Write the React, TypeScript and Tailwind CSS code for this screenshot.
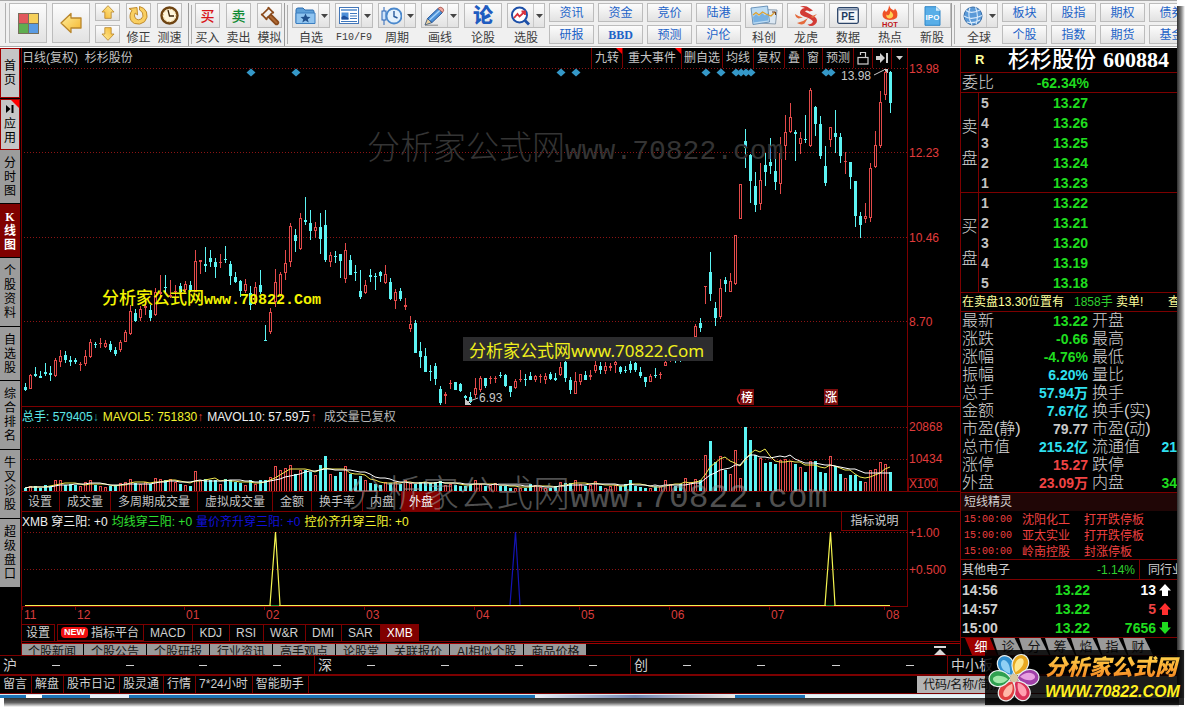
import React from "react";
import { Gavel } from "lucide-react";

const MONO = "[font-family:'Liberation_Mono','Noto_Sans_CJK_SC',monospace]";
const SERIF = "[font-family:'Liberation_Serif','Noto_Sans_CJK_SC',serif]";

/* ------------------------------------------------------------------ */
/* Data                                                                */
/* ------------------------------------------------------------------ */

// [high, low, body top, body bottom, rising], three units per pixel
type Candle = [number, number, number, number, 0 | 1];

const CANDLES: Candle[] = [
  [1015,1037,1025,1035,0],[988,1033,990,1033,1],[966,995,987,993,0],[978,1000,993,998,0],[955,992,981,987,0],
  [962,1007,985,990,0],[938,995,945,992,1],[915,965,933,952,1],[918,955,930,945,0],[933,962,946,950,0],
  [938,958,946,950,0],[950,978,956,960,1],[915,962,933,956,1],[882,940,892,935,1],[892,908,896,900,0],
  [880,910,893,896,1],[886,908,894,905,1],[888,922,898,915,0],[906,932,914,926,0],[885,922,892,914,1],
  [856,892,862,890,1],[780,870,798,866,1],[792,830,803,828,0],[782,828,792,820,1],[770,810,783,788,1],
  [780,828,795,820,0],[728,812,742,810,1],[690,755,742,748,1],[690,745,725,730,0],[705,760,750,755,1],
  [720,760,738,742,1],[715,745,722,740,0],[708,740,718,735,1],[708,742,720,738,0],[615,742,648,740,1],
  [645,686,646,650,1],[606,680,658,664,0],[615,665,640,650,0],[640,698,650,666,0],[628,670,650,654,1],
  [602,654,641,645,0],[648,720,656,692,0],[682,714,696,712,0],[704,755,708,738,0],[702,745,718,738,1],
  [722,795,745,780,0],[710,780,726,775,1],[675,748,720,742,0],[840,888,885,888,0],[788,866,800,860,1],
  [672,785,710,770,1],[680,755,688,752,1],[615,704,655,684,1],[533,665,544,650,1],[553,620,570,588,0],
  [505,616,520,612,1],[456,540,524,532,0],[495,584,535,558,0],[532,578,545,558,1],[504,626,546,582,0],
  [495,650,540,645,0],[622,665,630,652,1],[618,655,633,636,0],[626,698,628,648,0],[595,714,616,702,1],
  [630,690,645,690,0],[660,708,681,684,0],[675,762,738,756,0],[705,746,720,745,1],[672,710,690,695,0],
  [685,735,693,697,0],[678,712,682,692,0],[660,718,688,714,1],[700,765,710,762,0],[732,792,740,768,1],
  [728,768,738,762,0],[758,795,780,785,1],[812,860,836,852,1],[825,925,835,923,0],[890,970,917,935,0],
  [910,980,933,980,0],[960,1008,978,982,0],[955,1020,963,1002,0],[1022,1080,1032,1074,0],[1042,1078,1048,1054,1],
  [1005,1032,1014,1018,1],[1010,1036,1012,1034,0],[1015,1042,1018,1038,0],[1050,1080,1052,1058,0],[1042,1075,1055,1070,0],
  [1000,1060,1028,1050,1],[993,1042,1000,1036,1],[998,1028,1000,1022,0],[992,1016,1000,1003,1],[992,1014,999,1002,1],
  [980,998,990,994,0],[988,1025,990,1022,0],[1022,1055,1024,1040,0],[1002,1032,1008,1028,1],[975,1010,1003,1006,1],
  [988,1022,1003,1006,0],[980,1006,992,1004,0],[990,1010,994,1006,1],[988,1014,992,996,1],[983,1018,992,1004,1],
  [980,1004,986,1002,0],[985,1008,1000,1004,0],[952,994,966,990,1],[945,1010,950,1000,0],[995,1048,1006,1036,0],
  [980,1048,1008,1046,1],[988,1020,988,1010,1],[978,1004,990,1004,0],[975,1004,990,996,1],[948,985,960,978,1],
  [952,988,962,975,0],[950,986,962,978,1],[954,978,964,968,1],[945,985,950,960,1],[964,986,966,982,0],
  [962,985,974,978,0],[948,985,958,976,0],[950,980,955,975,0],[965,998,980,994,0],[995,1025,996,1010,0],
  [988,1012,993,1010,1],[970,1000,990,994,0],[980,1002,986,990,1],[945,962,950,962,1],[935,950,940,945,1],
  [938,955,942,946,0],[935,950,940,945,0],[900,945,910,940,1],[880,930,890,920,1],[838,880,844,876,1],
  [820,860,834,848,0],[722,776,722,724,1],[620,768,682,748,0],[770,842,788,820,0],[702,822,730,815,1],
  [695,742,704,718,0],[684,742,708,740,1],[570,720,571,716,1],[418,522,418,521,1],[252,368,288,308,0],
  [328,474,331,408,0],[380,500,424,480,0],[353,494,405,478,1],[325,422,360,380,0],[279,386,350,362,0],
  [310,434,378,410,0],[275,448,325,418,1],[210,346,262,304,1],[174,264,216,262,1],[254,347,260,266,0],
  [260,328,280,296,1],[210,294,283,286,0],[128,306,134,304,1],[183,272,186,236,0],[212,342,237,333,0],
  [303,422,363,414,0],[246,306,246,285,1],[195,324,263,276,0],[264,354,276,333,0],[320,388,349,352,1],
  [350,432,352,396,0],[407,546,408,513,0],[502,578,513,540,0],[474,534,512,522,1],[353,530,370,518,1],
  [258,368,300,367,1],[138,310,172,302,1],[75,165,82,150,1],[78,204,80,174,0],
];

// Volume per day, three units per pixel
const VOLUMES: number[] = [
  264,258,256,262,254,258,238,238,254,252,254,258,246,240,255,256,260,256,254,248,246,235,248,252,246,252,232,236,
  240,236,244,250,254,256,213,240,236,240,238,250,236,240,246,248,254,240,252,240,240,230,198,210,202,195,220,208,
  208,215,225,195,168,220,228,216,198,222,235,228,240,248,250,255,246,248,245,250,240,248,252,246,244,248,246,242,
  254,250,254,258,258,252,238,250,258,254,248,256,258,262,262,262,262,252,254,260,262,262,256,246,248,248,240,252,
  256,254,242,256,262,256,254,256,250,238,258,260,262,262,258,258,238,250,256,252,234,246,236,238,165,122,185,168,
  208,222,150,232,80,120,165,172,188,186,192,180,175,182,192,200,216,183,183,215,218,168,198,222,232,225,225,242,
  244,210,205,186,190,216,
].map((top) => 272 - top);

const movingAverage = (days: number) =>
  VOLUMES.map((_, i) => {
    const part = VOLUMES.slice(Math.max(0, i - days + 1), i + 1);
    const mean = part.reduce((a, b) => a + b, 0) / part.length;
    return `${3 + i * 5},${Math.round(64 - mean / 3)}`;
  }).join(" ");

const DIAMONDS = [229, 274, 539, 554, 684, 699, 714, 719, 724, 729, 804, 809];

const RAIL = [
  { text: "分时图", h: "h-[54px]" },
  { text: "K线图", h: "h-[54px]", active: true },
  { text: "个股资料", h: "h-[69px]" },
  { text: "自选股", h: "h-[54px]" },
  { text: "综合排名", h: "h-[69px]" },
  { text: "牛叉诊股", h: "h-[69px]" },
  { text: "超级盘口", h: "h-[69px]" },
];

const SELL = [["5", "13.27"], ["4", "13.26"], ["3", "13.25"], ["2", "13.24"], ["1", "13.23"]];
const BUY = [["1", "13.22"], ["2", "13.21"], ["3", "13.20"], ["4", "13.19"], ["5", "13.18"]];

const GREEN = "text-[#1fdc1f]";
const CYAN = "text-[#2fe0f0]";
const RED = "text-[#f04444]";
const GRAY = "text-[#c8c8c8]";

const DETAILS: [string, string, string, string, string, string][] = [
  ["最新", "13.22", GREEN, "开盘", "", GREEN],
  ["涨跌", "-0.66", GREEN, "最高", "", GREEN],
  ["涨幅", "-4.76%", GREEN, "最低", "", GREEN],
  ["振幅", "6.20%", CYAN, "量比", "", GREEN],
  ["总手", "57.94万", CYAN, "换手", "", GREEN],
  ["金额", "7.67亿", CYAN, "换手(实)", "", GREEN],
  ["市盈(静)", "79.77", GRAY, "市盈(动)", "", GREEN],
  ["总市值", "215.2亿", CYAN, "流通值", "21", CYAN],
  ["涨停", "15.27", RED, "跌停", "", GREEN],
  ["外盘", "23.09万", RED, "内盘", "34", GREEN],
];

const ALERTS = [
  ["15:00:00", "沈阳化工", "打开跌停板"],
  ["15:00:00", "亚太实业", "打开跌停板"],
  ["15:00:00", "岭南控股", "封涨停板"],
];

/* ------------------------------------------------------------------ */
/* Toolbar                                                             */
/* ------------------------------------------------------------------ */

const FACE = "flex items-center justify-center border border-[#bcbcbc] bg-gradient-to-b from-[#fcfcfc] to-[#e2e2e2]";

function Separator() {
  return (
    <div className="flex h-full w-1 shrink-0 justify-between border-l border-[#9c9c9c] py-0.5">
      <span />
      <span className="w-px bg-[#b0b0b0]" />
    </div>
  );
}

function Tool({ label, icon, menu, narrow }: { label: string; icon: React.ReactNode; menu?: boolean; narrow?: boolean }) {
  return (
    <button className={`flex shrink-0 flex-col items-center ${narrow ? "w-[25px]" : "w-[38px]"}`}>
      <span className={`${FACE} h-[25px] w-full`}>
        <span className="flex flex-1 items-center justify-center">{icon}</span>
        {menu && (
          <span className="flex h-full w-[11px] items-center justify-center border-l border-[#c8c8c8]">
            <svg width="7" height="4"><path d="M0 0H7L3.5 4Z" fill="#444" /></svg>
          </span>
        )}
      </span>
      <span className={`mt-0.5 h-4 whitespace-nowrap leading-4 text-[#3c3c3c] ${label === "F10/F9" ? `text-[10px] ${MONO}` : "text-xs"}`}>{label}</span>
    </button>
  );
}

function Pairs({ pairs }: { pairs: string[][] }) {
  return (
    <div className="flex shrink-0 gap-1">
      {pairs.map(([a, b]) => (
        <div key={a} className="flex w-[45px] flex-col gap-[3px]">
          {[a, b].map((t) => (
            <button key={t} className={`${FACE} h-[19px] w-full text-xs leading-4 text-[#1c63c8] ${t === "BBD" ? `font-bold ${SERIF}` : ""}`}>
              {t}
            </button>
          ))}
        </div>
      ))}
    </div>
  );
}

const Arrow = ({ size, turn }: { size: number; turn: string }) => (
  <svg width={size} height={size} viewBox="0 0 22 22" className={turn}>
    <defs>
      <linearGradient id="gold" x1="0" y1="0" x2="1" y2="1">
        <stop offset="0" stopColor="#fff0a0" /><stop offset="1" stopColor="#f5b52c" />
      </linearGradient>
    </defs>
    <path d="M1 11 11 1.5V6H21V16H11V20.5Z" fill="url(#gold)" stroke="#b9862c" strokeWidth="1.3" strokeLinejoin="round" />
  </svg>
);

const HomeIcon = () => (
  <svg width="21" height="21">
    <rect width="21" height="21" fill="#77705c" />
    <rect x="1" y="1" width="9" height="9" fill="#e2585c" /><rect x="11" y="1" width="9" height="9" fill="#f6d05a" />
    <rect x="1" y="11" width="9" height="9" fill="#5fae50" /><rect x="11" y="11" width="9" height="9" fill="#5a9be2" />
  </svg>
);
const RedoIcon = () => (
  <svg width="21" height="21" viewBox="0 0 21 21">
    <path d="M1 3.500 9 2.500 9.500 10 7.200 8Q5.500 11 7.500 13.500Q10 16 13.200 14Q16 11.500 14.500 8Q13.500 6 11.500 5V1.500Q16.500 2.500 18.500 7Q20.500 12.500 16.500 16.800Q12 20.500 6.500 18.500Q1.500 16 2 10.500Q2.300 7.500 4 5.500Z" fill="#f9cf62" stroke="#b98222" strokeWidth=".9" strokeLinejoin="round" />
  </svg>
);
const ClockIcon = () => (
  <svg width="19" height="19" viewBox="0 0 19 19">
    <circle cx="9.500" cy="9.500" r="8" fill="#fff6dc" stroke="#6e4413" strokeWidth="2.400" />
    <circle cx="9.500" cy="9.500" r="6.200" fill="none" stroke="#d09a40" strokeDasharray="1 2.200" />
    <path d="M8 4 9.500 10H14" fill="none" stroke="#3c2408" strokeWidth="1.300" />
  </svg>
);
const FolderIcon = () => (
  <svg width="21" height="18" viewBox="0 0 21 18">
    <path d="M1 16V3Q1 1 3 1H8L10 3H18Q19 3 19 5V7" fill="#5d9fd8" stroke="#2f6fb0" />
    <path d="M1 6H20V16.500H1Z" fill="#8fc4f0" stroke="#3c7fc0" />
    <path d="M10.500 6.500 12 9.800 15.500 10 12.800 12.200 13.700 15.500 10.500 13.600 7.300 15.500 8.200 12.200 5.500 10 9 9.800Z" fill="#21508c" />
  </svg>
);
const NewsIcon = () => (
  <svg width="20" height="17" viewBox="0 0 20 17">
    <rect x=".5" y=".5" width="19" height="16" fill="#fff" stroke="#4477b8" />
    <rect x="2" y="2" width="16" height="2" fill="#7aa6d8" /><rect x="2.500" y="5.500" width="7" height="7" fill="#4d8fd8" />
    <path d="M2.500 12.500V10L5 8.500 9.500 11V12.500Z" fill="#1c4f9c" />
    <path d="M11 6.500H18M11 9H18M11 11.500H18M2 14.500H18" stroke="#3f78bd" />
  </svg>
);
const CycleIcon = () => (
  <svg width="21" height="20" viewBox="0 0 21 20">
    <path d="M3 1V19" stroke="#2b66b8" /><rect x="1" y="5" width="4" height="9" fill="#cfe4fa" stroke="#2b66b8" />
    <circle cx="13" cy="10" r="7.500" fill="#e4f1fd" stroke="#4a88cc" strokeWidth="1.800" />
    <path d="M13 5V10.500L16.500 12" fill="none" stroke="#285a9c" strokeWidth="1.400" />
  </svg>
);
const PencilIcon = () => (
  <svg width="21" height="20" viewBox="0 0 21 20">
    <path d="M1 19 3.500 12.500 8 16.500Z" fill="#e8cfa0" stroke="#26466e" strokeWidth=".8" />
    <path d="M3.500 12.500 14 2.500 18.500 6.500 8 16.500Z" fill="#4c92d8" stroke="#26569a" /><path d="M5.500 14 16 4.200" stroke="#a9d4fa" strokeWidth="1.500" />
    <path d="M14 2.500Q16 0 18.500 2T18.500 6.500Z" fill="#f0a8a0" stroke="#a05048" strokeWidth=".8" /><path d="M1 19.200H14" stroke="#888" />
  </svg>
);
const PickIcon = () => (
  <svg width="21" height="20" viewBox="0 0 21 20">
    <circle cx="9.500" cy="9" r="7.500" fill="#fff" stroke="#1c4fa8" strokeWidth="2" />
    <path d="M15 14.500 19 18.500" stroke="#1c4fa8" strokeWidth="2.800" />
    <path d="M4 12 7.500 8 9.500 10.500 14.500 6M11.500 5.500H15V9" fill="none" stroke="#d8303c" strokeWidth="1.800" />
  </svg>
);
const ChartsIcon = () => (
  <svg width="28" height="21" viewBox="0 0 28 21">
    <path d="M9 4.500 27 5 25.500 19 8 18Z" fill="#dbe7f2" stroke="#8d9fb0" />
    <path d="M1 3 17.500 1 19.500 17 3 19.500Z" fill="#bcdcf4" stroke="#6a93ba" />
    <path d="M3 12 6 9 9 11.500 12 8 15 10.500 18 8V15.500L3.500 17.500Z" fill="#78b1e2" />
    <path d="M3 10 6 7.500 9 10 12.500 7 16 9 21 11 25 7" fill="none" stroke="#e0a02c" strokeWidth="1.300" /><path d="M22 7H25.500V10" fill="none" stroke="#704020" />
  </svg>
);
const DragonIcon = () => (
  <svg width="27" height="22" viewBox="0 0 27 22">
    <path d="M7 2Q12-.5 17 3.500L20 5.500 16.500 6.500Q13.500 4.500 12 6.500Q17 9 22 12Q26 15.500 22 19.500Q18 22.500 14.500 19.500Q19 19.500 20 16.500Q18 13.500 11 11.500Q5 9 8 5Q9.500 3 12 3Q9.500 1.500 7 2Z" fill="#d23a34" />
    <path d="M2 9Q6 12 10 12.500L5.500 13.500Q2.500 12.500 2 9ZM4 18Q10 17 15 13L11.500 18.500Q8 20.500 4 18ZM17 12 24 9 20 13Z" fill="#e46a3c" />
  </svg>
);
const PeIcon = () => (
  <svg width="22" height="17" viewBox="0 0 22 17">
    <rect x=".7" y=".7" width="20.600" height="15.600" rx="1.500" fill="#f4f6f9" stroke="#2b4468" strokeWidth="1.300" />
    <path d="M1 2.500H21" stroke="#7f93ae" strokeWidth="2" />
    <text x="11" y="13" textAnchor="middle" fontFamily="Liberation Sans" fontWeight="700" fontSize="10" fill="#223a60">PE</text>
  </svg>
);
const HotIcon = () => (
  <svg width="22" height="22" viewBox="0 0 22 22">
    <path d="M10 0Q11 4 15 5.500L16 3.500Q20 8 17.500 13Q15 15 11 15Q6 15 4 12Q2.500 8 5.500 5L7 7Q10 4.500 10 0Z" fill="#ef5226" />
    <path d="M11 6Q15 8.500 14 11.500Q12.500 14 10 13.500Q6.500 12.500 7.500 9.500L9 10.500Q11.500 9 11 6Z" fill="#ffd052" />
    <text x="11" y="21.500" textAnchor="middle" fontFamily="Liberation Sans" fontWeight="700" fontSize="7.500" fill="#c01418">HOT</text>
  </svg>
);
const IpoIcon = () => (
  <svg width="17" height="20" viewBox="0 0 17 20">
    <path d="M1 .7H12L16 4.700V19.300H1Z" fill="#58aee8" stroke="#2f86c8" /><path d="M12 .7V4.700H16Z" fill="#d4ecfb" />
    <text x="8.500" y="14" textAnchor="middle" fontFamily="Liberation Sans" fontWeight="700" fontSize="8" fill="#fff">IPO</text>
  </svg>
);
const GlobeIcon = () => (
  <svg width="21" height="20" viewBox="0 0 21 20">
    <circle cx="10" cy="10" r="9" fill="#5a9ad8" stroke="#3a6fa8" />
    <path d="M3 4.500Q8 8.500 17 4M1 10Q8 15 19 9.500M4 16Q10 18 17 14M7 1.500Q4 10 9 19M12.500 1.200Q16 10 13 18.500" fill="none" stroke="#d8eafa" strokeWidth="1.100" />
  </svg>
);

function Toolbar() {
  return (
    <header className="flex h-12 overflow-hidden border-b border-white bg-[#f0f0f0]">
      <div className="flex w-full items-start border-y border-[#a8a8a8] pl-[5px] pt-0.5">
        <div className="mr-[3px] h-10 w-px shrink-0 bg-[#b0b0b0]" />
        <div className="flex shrink-0 gap-[5px]">
          <button aria-label="主页" className={`${FACE} h-10 w-[38px]`}><HomeIcon /></button>
          <button aria-label="后退" className={`${FACE} h-10 w-[38px]`}><Arrow size={22} turn="" /></button>
          <div className="flex flex-col gap-1">
            <button aria-label="上一个" className={`${FACE} h-[18px] w-[25px]`}><Arrow size={14} turn="rotate-90" /></button>
            <button aria-label="下一个" className={`${FACE} h-[18px] w-[25px]`}><Arrow size={14} turn="-rotate-90" /></button>
          </div>
        </div>
        <div className="flex shrink-0 gap-1.5 px-1.5">
          <Tool narrow label="修正" icon={<RedoIcon />} />
          <Tool narrow label="测速" icon={<ClockIcon />} />
        </div>
        <Separator />
        <div className="flex shrink-0 gap-1.5 pl-[3px] pr-0.5">
          <Tool narrow label="买入" icon={<span className="text-sm font-medium leading-4 text-[#d81418]">买</span>} />
          <Tool narrow label="卖出" icon={<span className="text-sm font-medium leading-4 text-[#128a34]">卖</span>} />
          <Tool narrow label="模拟" icon={<Gavel size={20} className="-scale-x-100 fill-[#b06a34] text-[#8a4a1c]" />} />
        </div>
        <Separator />
        <div className="flex shrink-0 gap-[5px] px-1">
          <Tool menu label="自选" icon={<FolderIcon />} />
          <Tool menu label="F10/F9" icon={<NewsIcon />} />
          <Tool menu label="周期" icon={<CycleIcon />} />
          <Tool menu label="画线" icon={<PencilIcon />} />
          <Tool label="论股" icon={<span className="text-xl font-black leading-5 text-[#1f5cc0]">论</span>} />
          <Tool menu label="选股" icon={<PickIcon />} />
        </div>
        <Pairs pairs={[["资讯", "研报"], ["资金", "BBD"], ["竞价", "预测"], ["陆港", "沪伦"]]} />
        <div className="flex shrink-0 gap-1 pl-1">
          <Tool label="科创" icon={<ChartsIcon />} />
          <Tool label="龙虎" icon={<DragonIcon />} />
          <Tool label="数据" icon={<PeIcon />} />
          <Tool label="热点" icon={<HotIcon />} />
          <Tool label="新股" icon={<IpoIcon />} />
        </div>
        <Separator />
        <div className="flex shrink-0 gap-1 pl-[5px]">
          <Tool menu label="全球" icon={<GlobeIcon />} />
          <Pairs pairs={[["板块", "个股"], ["股指", "指数"], ["期权", "期货"], ["债券", "基金"]]} />
        </div>
      </div>
    </header>
  );
}

/* ------------------------------------------------------------------ */
/* Left rail                                                           */
/* ------------------------------------------------------------------ */

function Rail() {
  const column = "w-[13px] break-all text-center text-xs leading-[14px]";
  return (
    <nav className="flex w-[21px] shrink-0 flex-col bg-black pr-px text-black">
      <button className="flex h-[50px] items-center justify-center border border-[#a00000] bg-[#c6c6c6]">
        <span className={column}>首页</span>
      </button>
      <button className="relative mt-px flex h-[51px] flex-col items-center justify-center border border-[#a00000] bg-[#c6c6c6]">
        <svg width="8" height="8" className="mb-1"><path d="M0 0 4.500 4 0 8ZM5.500 0H7.500V8H5.500Z" /></svg>
        <span className={column}>应用</span>
        <svg width="8" height="8" className="absolute right-0 top-0"><path d="M0 0H8V8Z" fill="#f00" /></svg>
      </button>
      {RAIL.map((r) => (
        <button
          key={r.text}
          className={`flex items-center justify-center border-b border-black ${r.h} ${r.active ? "bg-[#800000] text-white" : "bg-[#9c9c9c]"}`}
        >
          <span className={`${column} ${r.active ? `font-bold ${SERIF}` : ""}`}>{r.text}</span>
        </button>
      ))}
    </nav>
  );
}

/* ------------------------------------------------------------------ */
/* Chart sections                                                      */
/* ------------------------------------------------------------------ */

function Grid({ ys }: { ys: number[] }) {
  return (
    <>
      {ys.map((y) => (
        <line key={y} x1="2" x2="100%" y1={y + 0.5} y2={y + 0.5} stroke="#8c1414" strokeDasharray="1 2" />
      ))}
    </>
  );
}

function Axis({ labels, height, box }: { labels: [number, string][]; height: number; box?: boolean }) {
  return (
    <svg height={height} className="w-[52px] shrink-0 text-xs" fill="#e03c3c">
      {box && <rect x=".5" y="71.500" width="29" height="13" fill="none" stroke="#7c0000" />}
      {labels.map(([y, t]) => (
        <text key={t} x="1" y={y + 4}>{t}</text>
      ))}
    </svg>
  );
}

function Badge({ x, text }: { x: number; text: string }) {
  return (
    <g>
      <rect x={x - 1} y="321" width="14" height="16" fill="#7c0c0c" />
      <text x={x} y="334" fill="#fff" fontSize="12" fontWeight="500">{text}</text>
    </g>
  );
}

function Watermark({ cjk, latin, className }: { cjk: string; latin: string; className: string }) {
  return (
    <div aria-hidden="true" className={`pointer-events-none absolute flex items-baseline whitespace-nowrap ${className}`}>
      <span className={cjk}>分析家公式网</span>
      <span className={`${latin} ${MONO}`}>www.70822.com</span>
    </div>
  );
}

function PriceChart() {
  const tab = "h-full border-l border-[#7c0000]";
  return (
    <section className="relative flex border-b border-[#7c0000]">
      <div className="min-w-0 flex-1 border-r border-[#7c0000]">
        <div className="flex h-5 items-center justify-between text-xs leading-4 text-[#c4c4c4]">
          <h2>日线(复权)&nbsp; 杉杉股份</h2>
          <div className="flex h-full">
            <button className={`${tab} relative px-[3px]`}>
              九转<svg width="6" height="6" className="absolute right-0 top-0"><path d="M0 0H6V6Z" fill="#f00" /></svg>
            </button>
            <button className={`${tab} relative px-[5px]`}>
              重大事件<svg width="6" height="6" className="absolute right-0 top-0"><path d="M0 0H6V6Z" fill="#f00" /></svg>
            </button>
            <button className={`${tab} px-0.5`}>删自选</button>
            <button className={`${tab} px-[3px]`}>均线</button>
            <button className={`${tab} px-[3px]`}>复权</button>
            <button className={`${tab} px-[3px]`}>叠</button>
            <button className={`${tab} px-[3px]`}>窗</button>
            <button className={`${tab} px-[3px]`}>预测</button>
            <button aria-label="锁定" className={`${tab} px-[3px]`}>
              <svg width="12" height="14" fill="none" stroke="#d0d0d0" strokeWidth="1.200">
                <rect x="1" y="6.500" width="10" height="6.500" /><path d="M3.500 4V1.500H8.500V6.500" />
              </svg>
            </button>
            <button aria-label="末尾" className={`${tab} px-[3px]`}>
              <svg width="12" height="12" fill="#d0d0d0"><path d="M0 4H4V1L9 6 4 11V8H0ZM10 1H12V11H10Z" /></svg>
            </button>
            <button aria-label="更多" className={`${tab} px-1`}>
              <svg width="7" height="4"><path d="M0 0H7L3.500 4Z" fill="#d0d0d0" /></svg>
            </button>
          </div>
        </div>
        <svg height="338" className="block w-full" shapeRendering="crispEdges">
          <Grid ys={[0, 84, 169, 253]} />
          {CANDLES.map(([hi, lo, top, bottom, up], i) => {
            const y = (v: number) => Math.round((v - 69) / 3);
            const x = 2 + i * 5;
            const h = Math.max(1, y(bottom) - y(top));
            const color = up ? "#e24a4a" : "#5cf4f4";
            return (
              <g key={i}>
                <rect x={x + 1} y={y(hi)} width="1" height={Math.max(1, y(lo) - y(hi))} fill={color} />
                {up && h > 2 ? (
                  <rect x={x + 0.5} y={y(top) + 0.5} width="2" height={h - 1} fill="#000" stroke={color} />
                ) : (
                  <rect x={x} y={y(top)} width="3" height={h} fill={color} />
                )}
              </g>
            );
          })}
          {DIAMONDS.map((x) => (
            <path key={x} d={`M${x} 0.500l4.500 4-4.500 4-4.500-4Z`} fill="#3598c8" shapeRendering="auto" />
          ))}
          <path d="M445 334 456 330M852 7 862 2" stroke="#c8c8c8" shapeRendering="auto" />
          <path d="M443 331V337H449ZM861 1H866V6Z" fill="#c8c8c8" />
          <text x="819" y="12" fill="#c8c8c8" fontSize="12">13.98</text>
          <text x="457" y="334" fill="#c8c8c8" fontSize="12">6.93</text>
          <path d="M718 326Q713 331 718 336" fill="none" stroke="#d83030" strokeWidth="1.500" shapeRendering="auto" />
          <Badge x={719} text="榜" />
          <Badge x={803} text="涨" />
        </svg>
      </div>
      <Axis height={358} labels={[[21, "13.98"], [105, "12.23"], [190, "10.46"], [274, "8.70"]]} />
      <Watermark className="left-[345px] top-[80px] leading-10 text-[#343434]" cjk="text-[33px] font-light" latin="text-[28px]" />
      <div className="absolute left-[80px] top-[241px] flex items-baseline whitespace-nowrap leading-5 text-[#f4f400]">
        <span className="text-[17px] font-medium">分析家公式网</span>
        <span className={`text-[15px] font-bold ${MONO}`}>www.70822.Com</span>
      </div>
      <div className="absolute left-[441px] top-[289px] h-6 w-[250px] whitespace-nowrap bg-[#2c2c2e] pl-1.5 text-[17px] leading-7 text-[#f0f01c] [font-family:'Noto_Sans','Noto_Sans_CJK_SC',sans-serif]">
        分析家公式网www.70822.Com
      </div>
    </section>
  );
}

function VolumeChart() {
  return (
    <section className="relative border-b border-[#7c0000]">
      <div className="flex border-b border-[#7c0000]">
        <div className="min-w-0 flex-1 border-r border-[#7c0000]">
          <div className="flex h-5 items-center gap-1 whitespace-nowrap text-xs">
            <span className="text-[#5ce8e8]">总手: 579405<span className="text-[#28a0a8]">↓</span></span>
            <span className="text-[#f4f430]">MAVOL5: 751830<span className="text-[#e03c3c]">↑</span></span>
            <span className="text-[#f0f0f0]">MAVOL10: 57.59万<span className="text-[#e03c3c]">↑</span></span>
            <span className="text-[#b8b8b8]">&nbsp;成交量已复权</span>
          </div>
          <svg height="64" className="block w-full" shapeRendering="crispEdges">
            <Grid ys={[0, 32]} />
            {VOLUMES.map((v, i) => {
              const h = Math.round(v / 3);
              const x = 2 + i * 5;
              return CANDLES[i][4] ? (
                <rect key={i} x={x + 0.5} y={64.5 - h} width="2" height={h} fill="#000" stroke="#e24a4a" />
              ) : (
                <rect key={i} x={x} y={64 - h} width="3" height={h} fill="#5cf4f4" />
              );
            })}
            <polyline points={movingAverage(5)} fill="none" stroke="#f0e850" shapeRendering="auto" />
            <polyline points={movingAverage(10)} fill="none" stroke="#fff" shapeRendering="auto" />
          </svg>
        </div>
        <Axis height={84} box labels={[[20, "20868"], [52, "10434"], [77, "X100"]]} />
      </div>
      <div className="flex h-[19px] whitespace-nowrap text-xs text-[#c4c4c4]">
        {["设置", "成交量", "多周期成交量", "虚拟成交量", "金额", "换手率", "内盘"].map((t) => (
          <button key={t} className="border-r border-[#7c0000] px-[7px] leading-5 first:pl-1.5">{t}</button>
        ))}
        <button className="bg-[#800000] px-[7px] leading-5 text-white">外盘</button>
      </div>
      <Watermark className="left-[326px] top-[68px] leading-10 text-[#a0a0a0]/50" cjk="text-[37px] font-light" latin="text-[33px]" />
    </section>
  );
}

function IndicatorChart() {
  const months: [number, string][] = [
    [2, "11"], [55, "12"], [164, "01"], [244, "02"], [344, "03"], [454, "04"], [559, "05"], [649, "06"], [749, "07"], [864, "08"],
  ];
  return (
    <section>
      <div className="flex">
        <div className="min-w-0 flex-1 border-b border-r border-[#7c0000]">
          <div className="flex h-5 items-start justify-between whitespace-nowrap text-xs leading-5">
            <div className="flex gap-1">
              <span className="text-[#f0f0f0]">XMB 穿三阳: +0</span>
              <span className="text-[#30e030]">均线穿三阳: +0</span>
              <span className="text-[#1010d8]">量价齐升穿三阳: +0</span>
              <span className="text-[#f4f430]">控价齐升穿三阳: +0</span>
            </div>
            <button className="h-[19px] w-[66px] border-b border-l border-[#7c0000] leading-[18px] text-[#d0d0d0]">指标说明</button>
          </div>
          <svg height="74" className="block w-full" fill="none">
            <Grid ys={[0, 37]} />
            <path d="M488 73 493.500 0 498 73" stroke="#1414b4" strokeWidth="1.200" />
            <path d="M248 73 253.500 0 258 73M803 73 808.500 0 813 73" stroke="#f4f450" strokeWidth="1.200" />
            <path d="M3 73.500H868" stroke="#f4f450" />
            <path d="M249 73.500H257M804 73.500H812" stroke="#30a030" />
          </svg>
        </div>
        <Axis height={95} labels={[[21, "+1.00"], [58, "+0.500"]]} />
      </div>
      <svg height="17" className="block w-full text-xs" fill="#d83c3c">
        {months.map(([x, t]) => (
          <g key={t}><rect x={x - 2} width="1" height="3" fill="#7c0000" /><text x={x} y="12">{t}</text></g>
        ))}
      </svg>
    </section>
  );
}

function LowerTabs() {
  return (
    <>
      <div className="flex h-[18px] border-b border-[#7c0000] text-xs text-[#d0d0d0]">
        <button className="border-r border-t border-[#7c0000] px-1 leading-4">设置</button>
        <button className="ml-0.5 flex items-center gap-[3px] border border-[#7c0000] pl-[3px] pr-1 leading-4">
          <span className="rounded-sm bg-[#f01010] px-[3px] text-[9px] font-bold leading-[11px] text-white">NEW</span>指标平台
        </button>
        {["MACD", "KDJ", "RSI", "W&R", "DMI", "SAR"].map((t) => (
          <button key={t} className="border-r border-t border-[#7c0000] pl-1.5 pr-[7px] leading-4">{t}</button>
        ))}
        <button className="bg-[#800000] px-1.5 leading-4 text-white">XMB</button>
      </div>
      <div className="mt-px flex h-3 items-start justify-between overflow-hidden border-t border-[#a00000]">
        <div className="flex whitespace-nowrap text-xs leading-4 text-[#141414]">
          {["个股新闻", "个股公告", "个股研报", "行业资讯", "高手观点", "论股堂", "关联报价", "AI相似个股", "商品价格"].map((t) => (
            <button key={t} className="border-r border-black bg-[#9a9a9a] px-[7px] first:pl-1.5">{t}</button>
          ))}
        </div>
        <button aria-label="展开" className="mr-3.5 pt-0.5">
          <svg width="12" height="9" fill="#d8d8d8"><path d="M0 0H12V2H0ZM6 3 12 9H0Z" /></svg>
        </button>
      </div>
    </>
  );
}

/* ------------------------------------------------------------------ */
/* Quote panel                                                         */
/* ------------------------------------------------------------------ */

function OrderRows({ side, rows }: { side: string; rows: string[][] }) {
  return (
    <tbody>
      {rows.map(([level, price], i) => (
        <tr key={level}>
          {i === 0 && (
            <th rowSpan={5} className="w-[18px] border-b border-r border-[#7c0000] text-base font-light leading-8 text-[#d4d4d4]">
              <span className="mx-auto block w-4 break-all">{side}</span>
            </th>
          )}
          <td className={`h-5 w-5 pl-0.5 text-[#c4c4c4] ${i === 4 ? "border-b border-[#7c0000]" : ""}`}>{level}</td>
          <td className={`h-5 w-[89px] text-right ${GREEN} ${i === 4 ? "border-b border-[#7c0000]" : ""}`}>{price}</td>
          <td className={i === 4 ? "border-b border-[#7c0000]" : ""} />
        </tr>
      ))}
    </tbody>
  );
}

const Tick = ({ color, down }: { color: string; down?: boolean }) => (
  <svg width="12" height="12" className={down ? "rotate-180" : ""}><path d="M6 0 12 6.500H9V12H3V6.500H0Z" fill={color} /></svg>
);

function QuotePanel() {
  const trades = [
    { time: "14:56", size: "13", tone: "text-white", icon: <Tick color="#fff" /> },
    { time: "14:57", size: "5", tone: RED, icon: <Tick color="#ff3030" /> },
    { time: "15:00", size: "7656", tone: GREEN, icon: <Tick color="#1fdc1f" down /> },
  ];
  return (
    <aside className="flex w-[217px] shrink-0 flex-col overflow-hidden border-l border-[#7c0000] text-sm font-bold">
      <h1 className={`flex h-6 items-center whitespace-nowrap text-[22px] leading-6 text-white ${SERIF}`}>
        <span className="w-[47px] pl-3.5 text-[13px] text-[#ffff9c] [font-family:'Liberation_Sans',sans-serif]">R</span>
        <span className="font-medium">杉杉股份</span>
        <span className="pl-[7px]">600884</span>
      </h1>
      <div className="flex h-[21px] items-center border-y border-[#7c0000]">
        <span className="w-[50px] pl-px text-base font-light leading-5 text-[#d4d4d4]">委比</span>
        <span className={`w-[78px] text-right ${GREEN}`}>-62.34%</span>
      </div>
      <table className="w-full table-fixed border-separate border-spacing-0 leading-4">
        <colgroup><col className="w-[18px]" /><col className="w-5" /><col className="w-[89px]" /><col /></colgroup>
        <OrderRows side="卖盘" rows={SELL} />
        <OrderRows side="买盘" rows={BUY} />
      </table>
      <div className="flex h-[19px] items-center whitespace-nowrap border-b border-[#7c0000] pl-px text-xs font-normal text-[#ffff9c]">
        <span className="w-[112px] shrink-0">在卖盘13.30位置有</span>
        <span className="w-[42px] shrink-0 text-[#2fd02f]">1858手</span>
        <span className="w-[52px] shrink-0">卖单!</span>
        <span>查</span>
      </div>
      <table className="w-full table-fixed border-separate border-spacing-0 whitespace-nowrap leading-[18px]">
        <colgroup><col className="w-[60px]" /><col className="w-[67px]" /><col className="w-[62px]" /><col /></colgroup>
        <tbody>
          {DETAILS.map(([a, v, tone, b, w, tone2]) => (
            <tr key={a}>
              <th className="h-[18px] pl-px text-left text-base font-light leading-[18px] text-[#d4d4d4]">{a}</th>
              <td className={`text-right ${tone}`}>{v}</td>
              <th className="pl-1 text-left text-base font-light leading-[18px] text-[#d4d4d4]">{b}</th>
              <td className={`text-right ${tone2}`}>{w}</td>
            </tr>
          ))}
        </tbody>
      </table>
      <h3 className="h-[19px] border-t border-[#7c0000] bg-[#200606] pl-[3px] text-xs font-normal leading-[18px] text-[#d0d0d0]">短线精灵</h3>
      <ul className="h-[49px] border-b border-[#7c0000] pt-px text-xs font-normal leading-4 text-[#f04040]">
        {ALERTS.map(([time, name, event]) => (
          <li key={name} className="flex h-4 items-center pl-[3px]">
            <span className={`w-[58px] text-[10px] ${MONO}`}>{time}</span>
            <span className="w-[62px]">{name}</span>
            <span>{event}</span>
          </li>
        ))}
      </ul>
      <div className="flex h-5 items-center whitespace-nowrap border-b border-[#7c0000] text-xs font-normal text-[#d0d0d0]">
        <span className="w-20 shrink-0 pl-px">其他电子</span>
        <span className="h-full w-[99px] shrink-0 border-r border-[#7c0000] pr-1 text-right leading-5 text-[#2fd02f]">-1.14%</span>
        <span className="pl-2">同行业</span>
      </div>
      <table className="w-full table-fixed border-separate border-spacing-0 border-b border-[#7c0000] leading-[18px]">
        <colgroup><col className="w-[50px]" /><col className="w-[79px]" /><col className="w-[66px]" /><col /></colgroup>
        <tbody>
          {trades.map((t) => (
            <tr key={t.time}>
              <td className="h-[19px] pl-px text-[#d0d0d0]">{t.time}</td>
              <td className={`text-right ${GREEN}`}>13.22</td>
              <td className={`text-right ${t.tone}`}>{t.size}</td>
              <td className="pl-[3px]">{t.icon}</td>
            </tr>
          ))}
        </tbody>
      </table>
      <div className="flex h-[17px] overflow-hidden pl-1 text-[13px] font-normal leading-[18px] text-[#141414]">
        <button className="w-8 shrink-0 bg-[#a00000] text-white [clip-path:polygon(0_0,78%_0,100%_100%,22%_100%)]">细</button>
        {["诊", "分", "筹", "焰", "指", "财"].map((t) => (
          <button key={t} className="-ml-1 w-[30px] shrink-0 bg-[#9a9a9a] [clip-path:polygon(0_0,72%_0,100%_100%,18%_100%)]">{t}</button>
        ))}
      </div>
    </aside>
  );
}

/* ------------------------------------------------------------------ */
/* Status bars and logo                                                */
/* ------------------------------------------------------------------ */

function IndexBar() {
  return (
    <div className="grid h-5 grid-cols-[315fr_316fr_317fr_229fr] overflow-hidden border-y border-[#7c0000] text-[#d0d0d0]">
      {["沪", "深", "创"].map((t) => (
        <div key={t} className="flex items-center border-r border-[#7c0000] pl-[3px] text-sm leading-[18px]">
          <span className="w-4">{t}</span>
          {[0, 1, 2, 3].map((n) => (
            <span key={n} className="flex flex-1 justify-center"><span className="h-px w-2 bg-[#d0d0d0]" /></span>
          ))}
        </div>
      ))}
      <div className="pl-[3px] text-sm leading-[18px]">中小板</div>
    </div>
  );
}

function Footer() {
  return (
    <footer className="flex h-[19px] items-stretch justify-between border-b border-t border-[#7c0000] text-xs leading-[17px] text-[#d0d0d0]">
      <nav className="flex whitespace-nowrap">
        {["留言", "解盘", "股市日记", "股灵通", "行情", "7*24小时", "智能助手"].map((t) => (
          <a key={t} href="#" className="border-r border-[#7c0000] pl-[3px] pr-1">{t}</a>
        ))}
      </nav>
      <input aria-label="代码/名称/简拼/功能" placeholder="代码/名称/简拼/功能" className="w-[260px] bg-[#b4b4b4] pl-1.5 text-xs text-black placeholder:text-[#141414]" />
    </footer>
  );
}

function Logo() {
  const petals: [number, string, string][] = [
    [-32, "#2f8fd0", "#8fd0f4"], [24, "#e8a820", "#ffe890"], [88, "#a040a8", "#e8a0e0"], [150, "#d83058", "#ffa0b0"],
    [208, "#e04040", "#ffb8a8"], [268, "#2fa050", "#a0e8a8"],
  ];
  return (
    <div className="absolute bottom-0.5 right-[3px] flex h-[55px] w-[199px] items-center gap-1 bg-black/85 pl-0.5">
      <svg width="54" height="52" viewBox="-27 -26 54 52" className="shrink-0">
        {petals.map(([a, edge, fill]) => (
          <g key={a} transform={`rotate(${a})`}>
            <path d="M0-3C-13-12-8-25 0-25S13-12 0-3Z" fill={edge} stroke="#e8f0f0" strokeWidth="1.200" />
            <path d="M-1-6C-7-12-5-20-1-21S5-13-1-6Z" fill={fill} />
          </g>
        ))}
        <circle r="4" fill="#d8c8a0" />
      </svg>
      <div className="flex flex-col whitespace-nowrap">
        <span className="bg-gradient-to-b from-[#ffd84c] to-[#f07818] bg-clip-text text-[22px] font-black italic leading-7 text-transparent">分析家公式网</span>
        <span className="text-base font-bold italic leading-5 text-[#fff020]">WWW.70822.COM</span>
      </div>
    </div>
  );
}

export default function App() {
  return (
    <div className="relative bg-white [font-family:'Liberation_Sans','Noto_Sans_CJK_SC',sans-serif]">
      <div className="flex">
        <main className="min-w-0 flex-1 bg-black">
          <Toolbar />
          <div className="flex">
            <Rail />
            <div className="min-w-0 flex-1 border-l border-[#7c0000]">
              <PriceChart />
              <VolumeChart />
              <IndicatorChart />
              <LowerTabs />
            </div>
            <QuotePanel />
          </div>
          <IndexBar />
          <Footer />
          <div className="flex h-1 border-t border-[#d8e8f0] bg-[#1c74b8]">
            <span className="ml-[26px] w-4 bg-white" />
            <span className="ml-12 w-[39px] bg-[#e8eef8]" />
            <span className="ml-auto mr-[70px] w-[200px] bg-gradient-to-r from-[#eef0f8] via-[#7488b4] to-[#f0e8e4]" />
            <span className="w-[372px] bg-[#e8f4f8]" />
          </div>
        </main>
        <div className="mt-1.5 w-2.5 bg-gradient-to-r from-[#303030] via-[#808080] via-40% to-white to-80%" />
      </div>
      <div className="ml-1 mr-2 h-[9px] bg-gradient-to-b from-[#303030] via-[#606060] via-50% to-white" />
      <Logo />
    </div>
  );
}
